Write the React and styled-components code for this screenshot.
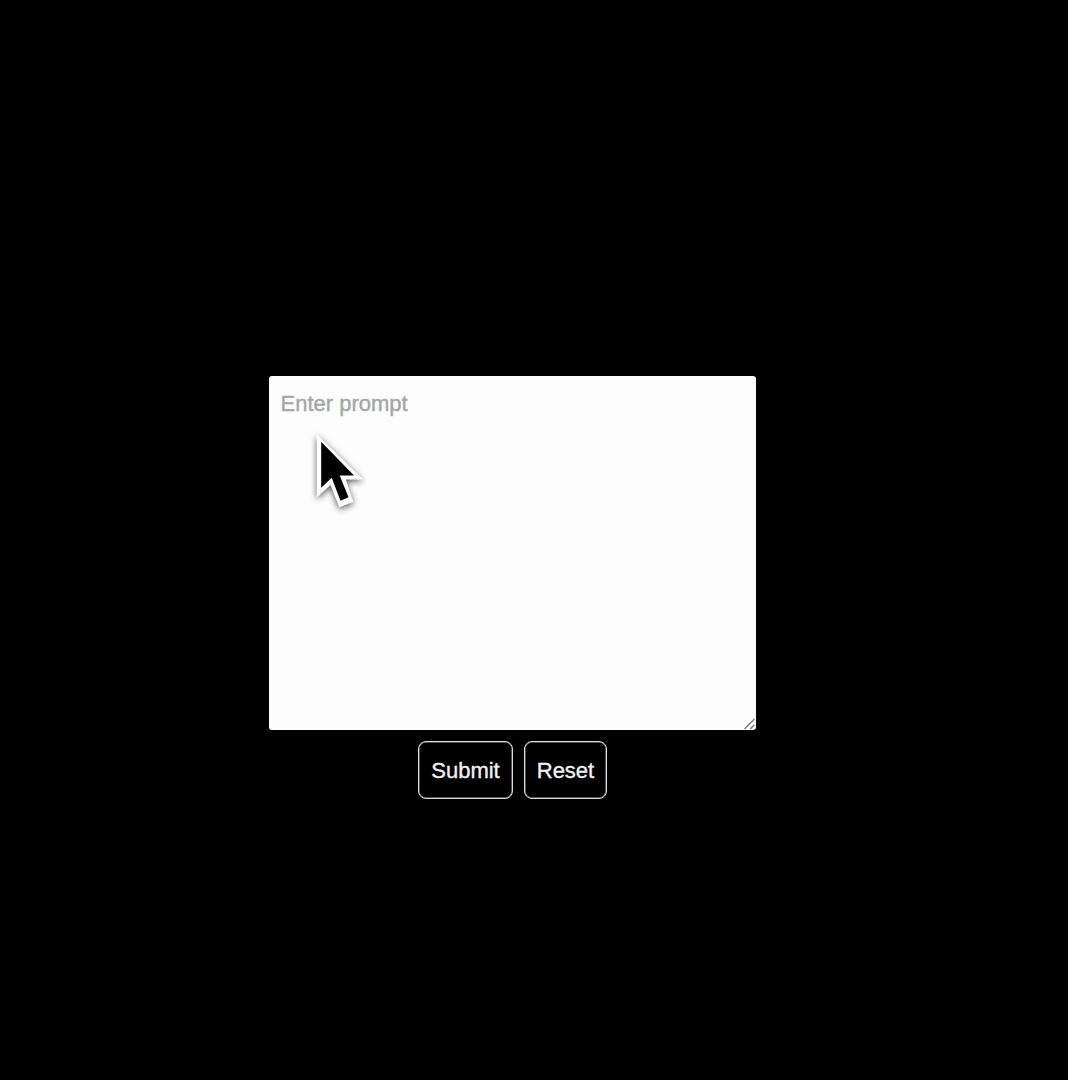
import React from "react";
import styled, { createGlobalStyle } from "styled-components";

const GlobalStyle = createGlobalStyle`
  * { box-sizing: border-box; }
  body { margin: 0; background: #000; font-family: "Liberation Sans", Arial, Helvetica, sans-serif; }
`;

const Page = styled.main`
  display: flex;
  flex-direction: column;
  align-items: center;
  height: 1080px;
  padding: 376px 43px 0 0;
  overflow: hidden;
  background: #000;
`;

const Form = styled.form`
  display: flex;
  flex-direction: column;
  align-items: center;
  gap: 11px;
  width: 487px;
`;

const Field = styled.div`
  position: relative;
  width: 100%;
  height: 354px;
`;

const PromptInput = styled.textarea`
  display: block;
  width: 100%;
  height: 100%;
  margin: 0;
  padding: 15px 11.5px;
  border: 0;
  border-radius: 3px;
  outline: none;
  resize: none;
  background: #fdfdfd;
  color: #111;
  font: 22px/26px "Liberation Sans", Arial, Helvetica, sans-serif;
  &::placeholder {
    color: #a3a6a7;
    opacity: 1;
    -webkit-text-stroke: 0.4px #a3a6a7;
  }
`;

const ResizeGrip = styled.svg`
  position: absolute;
  right: 0;
  bottom: 0;
  width: 13px;
  height: 13px;
  pointer-events: none;
`;

const Pointer = styled.svg`
  position: absolute;
  left: 41px;
  top: 54px;
  width: 60px;
  height: 90px;
  pointer-events: none;
  filter: drop-shadow(0 2px 3px rgba(0, 0, 0, 0.65));
`;

const Actions = styled.div`
  display: flex;
  gap: 11px;
`;

const ActionButton = styled.button`
  width: ${({ $width }) => $width}px;
  height: 58px;
  padding: 2px 0 0;
  border: 1px solid #dedede;
  border-radius: 8px;
  box-shadow: inset 0 0 0 0.5px #a0a0a0;
  background: #000;
  color: #f3f3f3;
  font: 22px/26px "Liberation Sans", Arial, Helvetica, sans-serif;
  -webkit-text-stroke: 0.35px #f3f3f3;
`;

export default function App() {
  return (
    <>
      <GlobalStyle />
      <Page>
        <Form onSubmit={(e) => e.preventDefault()}>
          <Field>
            <PromptInput placeholder="Enter prompt" aria-label="Prompt" />
            <ResizeGrip viewBox="0 0 13 13" aria-hidden="true">
              <path d="M1.5 12 11.5 2M7.2 12l4.3-4.3" stroke="#777" strokeWidth="1.4" fill="none" />
            </ResizeGrip>
            <Pointer viewBox="310 430 60 90" aria-hidden="true">
              <path d="M316.8 434v63.5l13.7-12.5 8.8 22.3 14-5.3-7.5-22.5H363Z" fill="#fff" />
              <path d="M321.2 441.8v46l10.5-10 8.8 23 8-3.5-8.8-21.8h14.3Z" fill="#000" />
            </Pointer>
          </Field>
          <Actions>
            <ActionButton type="submit" $width={95}>Submit</ActionButton>
            <ActionButton type="reset" $width={83}>Reset</ActionButton>
          </Actions>
        </Form>
      </Page>
    </>
  );
}
